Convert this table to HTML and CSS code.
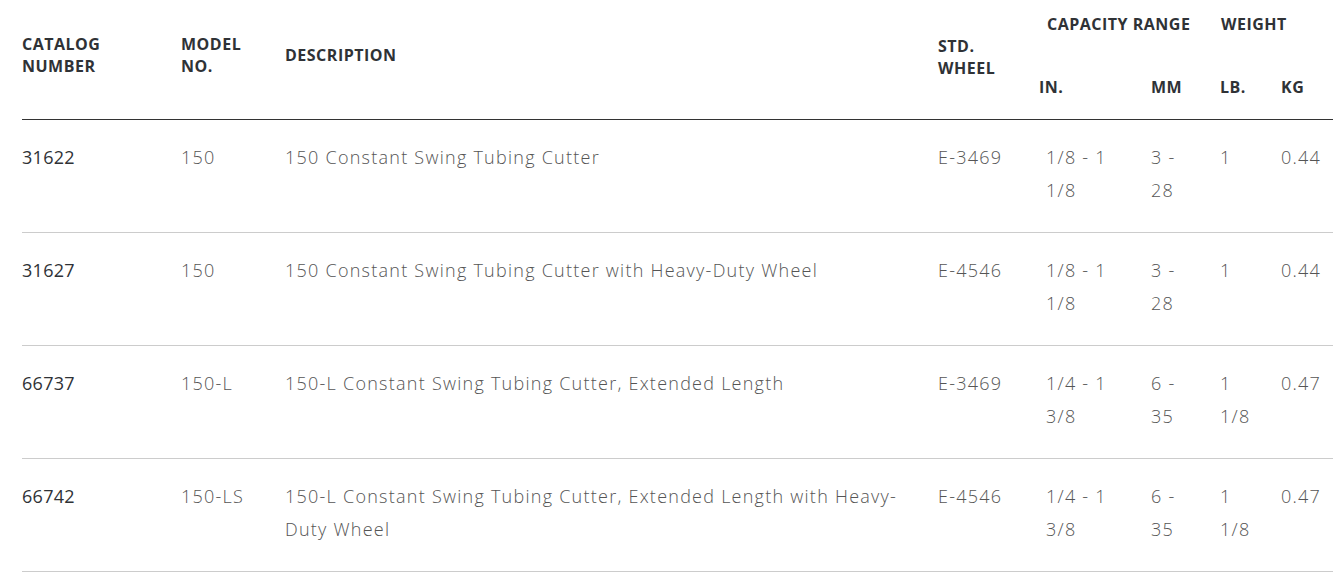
FILE: index.html
```html
<!DOCTYPE html>
<html>
<head>
<meta charset="utf-8">
<link rel="stylesheet" href="styles.css">
</head>
<body>
<div class="wrap">
<table class="spec">
  <colgroup>
    <col class="c-cat"><col class="c-model"><col class="c-desc"><col class="c-wheel">
    <col class="c-in"><col class="c-mm"><col class="c-lb"><col class="c-kg">
  </colgroup>
  <thead>
    <tr class="h1">
      <th rowspan="2">CATALOG<br>NUMBER</th>
      <th rowspan="2">MODEL<br>NO.</th>
      <th rowspan="2">DESCRIPTION</th>
      <th rowspan="2" class="wheel">STD.<br>WHEEL</th>
      <th colspan="2" class="group cap">CAPACITY RANGE</th>
      <th colspan="2" class="group wt">WEIGHT</th>
    </tr>
    <tr class="h2">
      <th class="in">IN.</th>
      <th>MM</th>
      <th>LB.</th>
      <th>KG</th>
    </tr>
  </thead>
  <tbody>
    <tr>
      <td class="cat">31622</td><td>150</td><td>150 Constant Swing Tubing Cutter</td><td>E-3469</td>
      <td>1/8 - 1 1/8</td><td>3 - 28</td><td>1</td><td>0.44</td>
    </tr>
    <tr>
      <td class="cat">31627</td><td>150</td><td>150 Constant Swing Tubing Cutter with Heavy-Duty Wheel</td><td>E-4546</td>
      <td>1/8 - 1 1/8</td><td>3 - 28</td><td>1</td><td>0.44</td>
    </tr>
    <tr>
      <td class="cat">66737</td><td>150-L</td><td>150-L Constant Swing Tubing Cutter, Extended Length</td><td>E-3469</td>
      <td>1/4 - 1 3/8</td><td>6 - 35</td><td>1 1/8</td><td>0.47</td>
    </tr>
    <tr>
      <td class="cat">66742</td><td>150-LS</td><td>150-L Constant Swing Tubing Cutter, Extended Length with Heavy-Duty Wheel</td><td>E-4546</td>
      <td>1/4 - 1 3/8</td><td>6 - 35</td><td>1 1/8</td><td>0.47</td>
    </tr>
  </tbody>
</table>
</div>
</body>
</html>
```
FILE: styles.css
```css
html, body {
  margin: 0;
  padding: 0;
  background: #fff;
}
.wrap {
  padding: 0 10px 0 22px;
}
.spec {
  width: 1311px;
  border-collapse: collapse;
  table-layout: fixed;
  font-family: "Open Sans", "Liberation Sans", sans-serif;
}
.c-cat { width: 159px; }
.c-model { width: 104px; }
.c-desc { width: 653px; }
.c-wheel { width: 101px; }
.c-in { width: 112px; }
.c-mm { width: 69px; }
.c-lb { width: 61px; }
.c-kg { width: 52px; }

.spec th {
  font-weight: 700;
  font-size: 16px;
  line-height: 22px;
  letter-spacing: 0.5px;
  color: #2f3236;
  text-align: left;
  padding: 0 10px 0 0;
  vertical-align: middle;
}
.spec thead th[rowspan] { padding-bottom: 10px; }
.spec thead th.wheel { padding-top: 4px; }
.spec thead tr.h1 th.group { padding-top: 13px; padding-bottom: 13px; padding-right: 0; vertical-align: top; }
.spec thead th.cap { padding-left: 8px; }
.spec thead th.wt { padding-left: 1px; }
.spec thead tr.h2 th { padding-top: 28px; padding-bottom: 21px; }
.spec thead tr:last-child th, .spec thead th[rowspan] { border-bottom: 1px solid #333; }

.spec td {
  font-weight: 300;
  font-size: 18px;
  line-height: 33px;
  color: #555;
  letter-spacing: 1.25px;
  padding: 21px 30px 25px 0;
  vertical-align: top;
  border-bottom: 1px solid #ccc;
}
.spec td:nth-child(4) { padding-right: 0; }
.spec td:nth-child(5) { padding-left: 7px; padding-right: 40px; }
.spec td:nth-child(6) { padding-right: 20px; }
.spec td:nth-child(7) { padding-right: 20px; }
.spec td:last-child { padding-right: 0; }
.spec td.cat {
  font-weight: 400;
  color: #2f3236;
  letter-spacing: 0.3px;
}
```
